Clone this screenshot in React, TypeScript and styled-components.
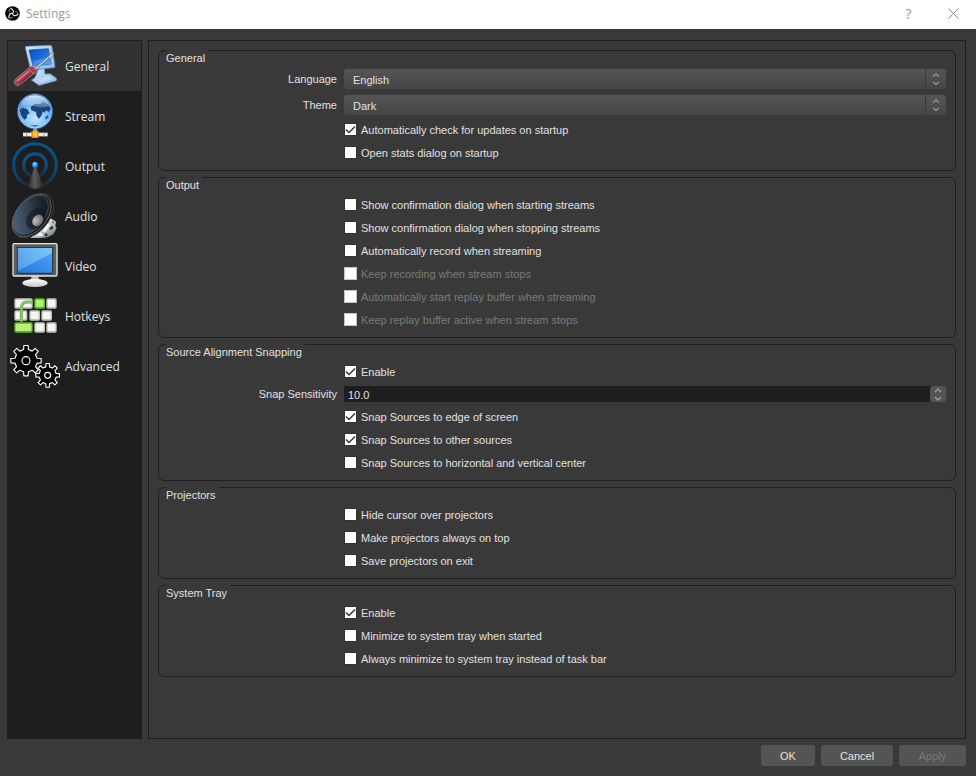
import React, { useId, useState } from "react";
import styled, { createGlobalStyle, css } from "styled-components";

const color = {
  window: "#3a3939",
  line: "#1f1f1f",
  list: "#1f1e1f",
  selected: "#313131",
  text: "#e1e0e1",
  muted: "#7a7979",
  control: "#555455",
};

const GlobalStyle = createGlobalStyle`
  * { box-sizing: border-box; }
  body {
    margin: 0;
    background: ${color.window};
    color: ${color.text};
    font: 11px/16px "Liberation Sans", Arial, sans-serif;
  }
  button, input, select { font: inherit; color: inherit; margin: 0; }
`;

const Window = styled.div`
  display: flex;
  flex-direction: column;
  min-height: 100vh;
`;

const TitleBar = styled.header`
  display: flex;
  align-items: center;
  height: 29px;
  padding: 0 0 2px 5px;
  background: #fff;
  color: #999;
`;

const Title = styled.h1`
  flex: 1;
  margin: 0;
  padding-left: 6px;
  font: 12px/16px "Open Sans", sans-serif;
`;

const TitleButton = styled.button`
  display: grid;
  place-items: center;
  width: 45px;
  height: 26px;
  padding: 0;
  border: 0;
  background: none;
  font: 14px/16px "Open Sans", sans-serif;
`;

const Body = styled.div`
  flex: 1;
  display: flex;
  gap: 6px;
  padding: 11px 10px 6px 7px;
`;

const Sidebar = styled.nav`
  width: 135px;
  flex: none;
  padding: 1px;
  background: ${color.list};
`;

const NavItem = styled.button<{ $active: boolean }>`
  display: flex;
  align-items: center;
  gap: 5px;
  width: 100%;
  height: 50px;
  padding: 0 2px;
  border: 0;
  background: ${(p) => (p.$active ? color.selected : "transparent")};
  font: 12px/16px "Open Sans", "Noto Sans", sans-serif;
  text-align: left;
`;

const NavName = styled.span`
  padding-top: 2px;
`;

const Picture = styled.svg`
  width: 50px;
  height: 50px;
  flex: none;
`;

const Panel = styled.main`
  flex: 1;
  display: flex;
  flex-direction: column;
  gap: 6px;
  padding: 9px;
  border: 1px solid ${color.line};
`;

const GroupBox = styled.section`
  padding: 0 9px 9px 7px;
  border: 1px solid ${color.line};
  border-radius: 6px;
`;

const GroupTitle = styled.h2`
  width: fit-content;
  height: 16px;
  margin: -1px 0 3px;
  padding-right: 3px;
  background: ${color.window};
  font: inherit;
`;

const Rows = styled.div`
  display: flex;
  flex-direction: column;
  gap: 6px;
`;

const FormRow = styled.div`
  display: grid;
  grid-template-columns: 171px 1fr;
  column-gap: 7px;
  align-items: center;
`;

const FieldLabel = styled.label`
  text-align: right;
`;

const CheckLabel = styled.label<{ $disabled?: boolean }>`
  grid-column: 2;
  display: flex;
  align-items: center;
  gap: 4px;
  height: 17px;
  color: ${(p) => (p.$disabled ? color.muted : color.text)};
`;

const tick = css`
  background-image: url("data:image/svg+xml,%3Csvg xmlns='http://www.w3.org/2000/svg' viewBox='0 0 11 11'%3E%3Cpath d='M1 5.5 4 8.5 10 2.5' fill='none' stroke='%23333' stroke-width='1.4'/%3E%3C/svg%3E");
`;

const Tick = styled.input`
  appearance: none;
  width: 13px;
  height: 13px;
  flex: none;
  border: 1px solid #323232;
  background: #fff;
  &:checked { ${tick} }
  &:disabled { border-color: #c4c4c4; }
`;

const Combo = styled.div`
  display: grid;
  grid-template-columns: 1fr 21px;
  height: 20px;
  border-radius: 3px;
  background: linear-gradient(#565556, #464546);
`;

const ComboSelect = styled.select`
  grid-area: 1 / 1 / 2 / 3;
  appearance: none;
  width: 100%;
  padding: 1px 9px 0;
  border: 0;
  background: none;
  option { background: ${color.list}; }
`;

const ComboArrows = styled.span`
  grid-area: 1 / 2;
  display: grid;
  place-items: center;
  border-left: 1px solid ${color.window};
  pointer-events: none;
`;

const Spin = styled.div`
  display: flex;
  height: 16px;
  background: ${color.list};
  border-radius: 0 3px 3px 0;
`;

const SpinInput = styled.input`
  flex: 1;
  min-width: 0;
  padding: 1px 4px 0;
  border: 0;
  background: none;
`;

const SpinButtons = styled.div`
  display: flex;
  flex-direction: column;
  width: 16px;
  border-radius: 3px;
  background: ${color.control};
`;

const SpinButton = styled.button`
  display: grid;
  place-items: center;
  height: 8px;
  padding: 0;
  border: 0;
  background: none;
`;

const Footer = styled.footer`
  display: flex;
  justify-content: flex-end;
  gap: 6px;
  padding: 0 10px 10px;
`;

const DialogButton = styled.button<{ $width: number }>`
  width: ${(p) => p.$width}px;
  height: 21px;
  padding: 0;
  border: 0;
  border-radius: 3px;
  background: ${color.control};
  &:disabled { color: ${color.muted}; }
`;

function Chevron({ down = false }: { down?: boolean }) {
  return (
    <svg width="8" height="5" viewBox="0 0 8 5" fill="none" stroke="#a0a0a0" strokeWidth="1.4" aria-hidden>
      <path d={down ? "M1 1 4 4 7 1" : "M1 4 4 1 7 4"} />
    </svg>
  );
}

function DoubleChevron() {
  return (
    <svg width="8" height="14" viewBox="0 0 8 14" fill="none" stroke="#999" strokeWidth="1.3" aria-hidden>
      <path d="M1 4.5 4 2 7 4.5M1 10 4 12.5 7 10" />
    </svg>
  );
}

function ObsLogo() {
  return (
    <svg width="15" height="15" viewBox="0 0 45 45" aria-hidden>
      <circle cx="22.5" cy="22.5" r="22" fill="#050505" />
      <g fill="none" stroke="#e4e4e4" strokeWidth="3.6" strokeLinecap="round">
        {[0, 120, 240].map((angle) => (
          <path key={angle} d="M22.5 22.5C28 18 26 12 17 7" transform={`rotate(${angle} 22.5 22.5)`} />
        ))}
      </g>
      <g fill="none" stroke="#a6a6a6" strokeWidth="2.4" strokeLinecap="round">
        {[0, 120, 240].map((angle) => (
          <path key={angle} d="M17 7C12 9 11 14 13 18" transform={`rotate(${angle} 22.5 22.5)`} />
        ))}
      </g>
    </svg>
  );
}

function GeneralIcon() {
  return (
    <Picture viewBox="0 0 150 150" aria-hidden>
      <defs>
        <linearGradient id="gen-screen" x1="0" y1="0" x2="1" y2="1">
          <stop offset="0" stopColor="#0c48b8" />
          <stop offset=".5" stopColor="#1a6cdc" />
          <stop offset="1" stopColor="#4fa6fa" />
        </linearGradient>
        <linearGradient id="gen-case" x1="0" y1="0" x2="1" y2="1">
          <stop offset="0" stopColor="#cfe6fb" />
          <stop offset="1" stopColor="#8db9e6" />
        </linearGradient>
      </defs>
      <path d="M78 102 Q76 112 64 117 L84 131 Q88 134 96 131 L137 120 Q143 117 138 110 L120 98 105 99 103 82 84 86Z" fill="url(#gen-case)" stroke="#5a83b8" strokeWidth="2" />
      <path d="M83 117 112 106 129 113 98 124Z" fill="#dcebf8" />
      <path d="M88 118 113 109M96 121 122 112" stroke="#8bb3dc" strokeWidth="2" />
      <path d="M46 20 Q46 16 50 16 L121 13 Q125 13 126 18 L135 75 Q136 80 131 80 L66 87 Q62 87 61 83Z" fill="url(#gen-case)" stroke="#5b8cc8" strokeWidth="2" />
      <path d="M57 27 115 23 123 69 69 75Z" fill="url(#gen-screen)" stroke="#1b4d9c" strokeWidth="2" />
      <path d="M68 60Q92 56 119 47L123 69 69 75Z" fill="#6db8ff" opacity=".4" />
      <path d="M74 85 120 46" stroke="#566273" strokeWidth="8" />
      <path d="M74 85 120 46" stroke="#d5dde6" strokeWidth="4" />
      <path d="M115 48 121 38 132 34 129 43 121 53Z" fill="#c8d2dd" stroke="#657080" strokeWidth="2" />
      <path d="M13 127 Q11 119 19 112 L52 85 Q57 76 67 75 L80 88 Q77 100 67 101 L29 132 Q18 138 13 127Z" fill="#a23f50" stroke="#c08b98" strokeWidth="2" />
      <path d="M22 119 56 91" stroke="#cf7e8c" strokeWidth="5" strokeLinecap="round" />
      <path d="M30 126 65 96" stroke="#7d2637" strokeWidth="4" strokeLinecap="round" />
      <path d="M56 84 70 98" stroke="#c87c8a" strokeWidth="3" />
    </Picture>
  );
}

function StreamIcon() {
  return (
    <Picture viewBox="0 0 150 150" aria-hidden>
      <defs>
        <radialGradient id="str-globe" cx=".5" cy=".7" r=".75">
          <stop offset="0" stopColor="#bfe4ff" />
          <stop offset=".5" stopColor="#7fc0f6" />
          <stop offset="1" stopColor="#1f69c4" />
        </radialGradient>
        <linearGradient id="str-gloss" x1="0" y1="0" x2="0" y2="1">
          <stop offset="0" stopColor="#fff" />
          <stop offset="1" stopColor="#a8d5fa" stopOpacity=".35" />
        </linearGradient>
      </defs>
      <rect x="70" y="108" width="11" height="18" fill="#b6b6b6" />
      <circle cx="75" cy="61" r="51" fill="url(#str-globe)" stroke="#cfe6fb" strokeWidth="2" />
      <circle cx="75" cy="61" r="53" fill="none" stroke="#2464a8" strokeWidth="2" />
      <path d="M29 57 37 50 51 54 59 66 51 72 50 82 43 86 34 74Z" fill="#1d4478" />
      <path d="M62 48 73 39 92 38 98 30 113 39 122 52 117 63 108 58 102 66 98 61 95 73 87 83 80 74 78 63 64 58Z" fill="#1d4478" />
      <path d="M105 79 113 73 116 79 108 86ZM60 103 88 103 76 107Z" fill="#2b5c97" />
      <path d="M31 45 Q39 14 75 13 Q111 14 119 45 Q97 54 75 46 Q50 38 31 45Z" fill="url(#str-gloss)" opacity=".8" />
      <rect x="39" y="125" width="74" height="11" fill="#e6e6e6" stroke="#777" />
      <path d="M40 131H112" stroke="#fff" strokeWidth="3" />
      <rect x="64" y="119" width="22" height="22" rx="3" fill="#f98b0c" />
      <rect x="69" y="123" width="12" height="14" fill="#ffc44b" />
      <path d="M50 125V136M102 125V136" stroke="#9d9d9d" strokeWidth="3" />
    </Picture>
  );
}

function OutputIcon() {
  return (
    <Picture viewBox="0 0 150 150" aria-hidden>
      <defs>
        <linearGradient id="out-ring" x1="0" y1="0" x2="0" y2="1">
          <stop offset="0" stopColor="#06568f" />
          <stop offset=".6" stopColor="#0a4a77" />
          <stop offset="1" stopColor="#1d2b36" />
        </linearGradient>
        <linearGradient id="out-mast" x1="0" y1="0" x2="1" y2="0">
          <stop offset="0" stopColor="#2b2b2b" />
          <stop offset=".45" stopColor="#595959" />
          <stop offset="1" stopColor="#303030" />
        </linearGradient>
      </defs>
      <circle cx="75" cy="72" r="64" fill="none" stroke="url(#out-ring)" strokeWidth="9" />
      <circle cx="75" cy="72" r="34" fill="none" stroke="url(#out-ring)" strokeWidth="9" />
      <path d="M74 74 54 136 Q75 152 98 136 L78 74Z" fill="url(#out-mast)" />
      <circle cx="75" cy="71" r="9" fill="#1689e8" />
      <circle cx="74" cy="69" r="5" fill="#7cc9ff" />
    </Picture>
  );
}

function AudioIcon() {
  return (
    <Picture viewBox="0 0 150 150" aria-hidden>
      <defs>
        <linearGradient id="aud-cone" x1="0" y1=".2" x2="1" y2=".7">
          <stop offset="0" stopColor="#50677f" />
          <stop offset=".5" stopColor="#30404f" />
          <stop offset="1" stopColor="#12161b" />
        </linearGradient>
        <linearGradient id="aud-metal" x1="0" y1="0" x2="1" y2="1">
          <stop offset="0" stopColor="#fafafa" />
          <stop offset=".55" stopColor="#c3cacc" />
          <stop offset="1" stopColor="#596165" />
        </linearGradient>
        <radialGradient id="aud-cap" cx=".35" cy=".35" r=".7">
          <stop offset="0" stopColor="#c0c0c0" />
          <stop offset="1" stopColor="#666" />
        </radialGradient>
      </defs>
      <path d="M122 82 138 92 136 104 140 112 130 130 112 139 92 141 62 140 92 106Z" fill="url(#aud-metal)" />
      <path d="M98 120 111 97 120 103 106 123ZM80 134 91 124 100 134Z" fill="#fbfbfb" />
      <path d="M118 112 127 104 130 111 122 118ZM103 130 110 126 114 133 107 137ZM127 90 132 94 128 98Z" fill="#2d3336" />
      <ellipse cx="71" cy="75" rx="76" ry="46" transform="rotate(-51 71 75)" fill="#151515" stroke="#4d4d4d" strokeWidth="2" />
      <ellipse cx="65" cy="73" rx="73" ry="46" transform="rotate(-51 65 73)" fill="#1c1f22" stroke="#7f898f" strokeWidth="2" />
      <ellipse cx="62" cy="72" rx="67" ry="41" transform="rotate(-51 62 72)" fill="url(#aud-cone)" stroke="#56636f" strokeWidth="2" />
      <ellipse cx="78" cy="82" rx="36" ry="25" transform="rotate(-51 78 82)" fill="#12161c" opacity=".6" />
      <ellipse cx="83" cy="88" rx="19" ry="15" transform="rotate(-51 83 88)" fill="url(#aud-cap)" />
    </Picture>
  );
}

function VideoIcon() {
  return (
    <Picture viewBox="0 0 150 150" aria-hidden>
      <defs>
        <linearGradient id="vid-screen" x1="1" y1="0" x2="0" y2="1">
          <stop offset="0" stopColor="#4ea5f2" />
          <stop offset="1" stopColor="#2478dc" />
        </linearGradient>
        <linearGradient id="vid-shine" x1="0" y1="0" x2="1" y2="0">
          <stop offset="0" stopColor="#a1dcff" stopOpacity=".35" />
          <stop offset="1" stopColor="#8fe0ff" stopOpacity=".6" />
        </linearGradient>
        <linearGradient id="vid-foot" x1="0" y1="0" x2="0" y2="1">
          <stop offset="0" stopColor="#fff" />
          <stop offset="1" stopColor="#c5c5c5" />
        </linearGradient>
      </defs>
      <path d="M65 104H85L88 121H62Z" fill="#bcbcbc" />
      <ellipse cx="75" cy="126" rx="38" ry="12" fill="url(#vid-foot)" />
      <rect x="9" y="8" width="132" height="97" rx="4" fill="#606060" stroke="#e3e3e3" strokeWidth="4" />
      <rect x="22" y="19" width="106" height="78" fill="url(#vid-screen)" stroke="#2a2a2a" strokeWidth="3" />
      <path d="M23 21H126V36L23 90Z" fill="url(#vid-shine)" />
    </Picture>
  );
}

const keycaps = [
  { x: 13, y: 22, w: 55 }, { x: 73, y: 22, w: 32, green: true }, { x: 109, y: 22, w: 31 },
  { x: 13, y: 58, w: 39 }, { x: 58, y: 58, w: 32 }, { x: 94, y: 58, w: 32 },
  { x: 13, y: 94, w: 55, green: true }, { x: 73, y: 94, w: 32 }, { x: 109, y: 94, w: 31 },
];

function HotkeysIcon() {
  return (
    <Picture viewBox="0 0 150 150" aria-hidden>
      {keycaps.map((k) => (
        <g key={`${k.x}-${k.y}`}>
          <rect x={k.x} y={k.y} width={k.w} height="31" rx="5" fill={k.green ? "#5eb51b" : "#c2c2bd"} />
          <rect x={k.x + 4} y={k.y + 4} width={k.w - 8} height="22" rx="4" fill={k.green ? "#b5ef7c" : "#f5f5f1"} />
        </g>
      ))}
      <path d="M68 33H51Q34 33 34 54V92" fill="none" stroke="#6fa84a" strokeWidth="9" />
      <path d="M68 33H51Q34 33 34 54V92" fill="none" stroke="#98c47c" strokeWidth="4" />
    </Picture>
  );
}

function gearPath(cx: number, cy: number, outer: number, inner: number, teeth: number) {
  const step = (Math.PI * 2) / teeth;
  const points: string[] = [];
  for (let i = 0; i < teeth; i++) {
    const mid = i * step - Math.PI / 2;
    const corners: [number, number][] = [
      [inner, -0.27], [outer, -0.18], [outer, 0.18], [inner, 0.27],
    ];
    corners.forEach(([r, f]) => {
      const a = mid + f * step;
      points.push(`${(cx + r * Math.cos(a)).toFixed(1)} ${(cy + r * Math.sin(a)).toFixed(1)}`);
    });
  }
  return `M${points.join("L")}Z`;
}

function AdvancedIcon() {
  return (
    <Picture viewBox="0 0 150 150" aria-hidden>
      <g fill="#000" stroke="#fff" strokeWidth="3.4" strokeLinejoin="round">
        <path d={gearPath(48, 59, 46, 34, 8)} />
        <circle cx="48" cy="59" r="12" />
        <path d={gearPath(113, 103, 36, 26, 8)} />
        <circle cx="113" cy="103" r="9" />
      </g>
    </Picture>
  );
}

const pages = [
  { name: "General", Icon: GeneralIcon },
  { name: "Stream", Icon: StreamIcon },
  { name: "Output", Icon: OutputIcon },
  { name: "Audio", Icon: AudioIcon },
  { name: "Video", Icon: VideoIcon },
  { name: "Hotkeys", Icon: HotkeysIcon },
  { name: "Advanced", Icon: AdvancedIcon },
];

function Group({ title, children }: { title: string; children: React.ReactNode }) {
  return (
    <GroupBox aria-label={title}>
      <GroupTitle>{title}</GroupTitle>
      <Rows>{children}</Rows>
    </GroupBox>
  );
}

function Check({ label, checked, disabled }: { label: string; checked?: boolean; disabled?: boolean }) {
  return (
    <FormRow>
      <CheckLabel $disabled={disabled}>
        <Tick type="checkbox" defaultChecked={checked} disabled={disabled} />
        {label}
      </CheckLabel>
    </FormRow>
  );
}

function Choice({ label, options }: { label: string; options: string[] }) {
  const id = useId();
  return (
    <FormRow>
      <FieldLabel htmlFor={id}>{label}</FieldLabel>
      <Combo>
        <ComboSelect id={id}>
          {options.map((o) => <option key={o}>{o}</option>)}
        </ComboSelect>
        <ComboArrows><DoubleChevron /></ComboArrows>
      </Combo>
    </FormRow>
  );
}

function NumberField({ label, initial }: { label: string; initial: number }) {
  const id = useId();
  const [value, setValue] = useState(initial.toFixed(1));
  const nudge = (by: number) => setValue((v) => ((parseFloat(v) || 0) + by).toFixed(1));
  return (
    <FormRow>
      <FieldLabel htmlFor={id}>{label}</FieldLabel>
      <Spin>
        <SpinInput id={id} inputMode="decimal" value={value} onChange={(e) => setValue(e.target.value)} />
        <SpinButtons>
          <SpinButton aria-label="Increase" onClick={() => nudge(0.5)}><Chevron /></SpinButton>
          <SpinButton aria-label="Decrease" onClick={() => nudge(-0.5)}><Chevron down /></SpinButton>
        </SpinButtons>
      </Spin>
    </FormRow>
  );
}

export default function App() {
  const [page, setPage] = useState("General");
  return (
    <Window>
      <GlobalStyle />
      <TitleBar>
        <ObsLogo />
        <Title>Settings</Title>
        <TitleButton aria-label="Help">?</TitleButton>
        <TitleButton aria-label="Close">
          <svg width="11" height="11" viewBox="0 0 11 11" stroke="#8c8c8c" aria-hidden>
            <path d="M.5.5 10.5 10.5M10.5.5.5 10.5" />
          </svg>
        </TitleButton>
      </TitleBar>
      <Body>
        <Sidebar aria-label="Settings pages">
          {pages.map(({ name, Icon }) => (
            <NavItem key={name} $active={name === page} onClick={() => setPage(name)}>
              <Icon />
              <NavName>{name}</NavName>
            </NavItem>
          ))}
        </Sidebar>
        <Panel>
          <Group title="General">
            <Choice label="Language" options={["English"]} />
            <Choice label="Theme" options={["Dark"]} />
            <Check label="Automatically check for updates on startup" checked />
            <Check label="Open stats dialog on startup" />
          </Group>
          <Group title="Output">
            <Check label="Show confirmation dialog when starting streams" />
            <Check label="Show confirmation dialog when stopping streams" />
            <Check label="Automatically record when streaming" />
            <Check label="Keep recording when stream stops" disabled />
            <Check label="Automatically start replay buffer when streaming" disabled />
            <Check label="Keep replay buffer active when stream stops" disabled />
          </Group>
          <Group title="Source Alignment Snapping">
            <Check label="Enable" checked />
            <NumberField label="Snap Sensitivity" initial={10} />
            <Check label="Snap Sources to edge of screen" checked />
            <Check label="Snap Sources to other sources" checked />
            <Check label="Snap Sources to horizontal and vertical center" />
          </Group>
          <Group title="Projectors">
            <Check label="Hide cursor over projectors" />
            <Check label="Make projectors always on top" />
            <Check label="Save projectors on exit" />
          </Group>
          <Group title="System Tray">
            <Check label="Enable" checked />
            <Check label="Minimize to system tray when started" />
            <Check label="Always minimize to system tray instead of task bar" />
          </Group>
        </Panel>
      </Body>
      <Footer>
        <DialogButton $width={54}>OK</DialogButton>
        <DialogButton $width={72}>Cancel</DialogButton>
        <DialogButton $width={67} disabled>Apply</DialogButton>
      </Footer>
    </Window>
  );
}
